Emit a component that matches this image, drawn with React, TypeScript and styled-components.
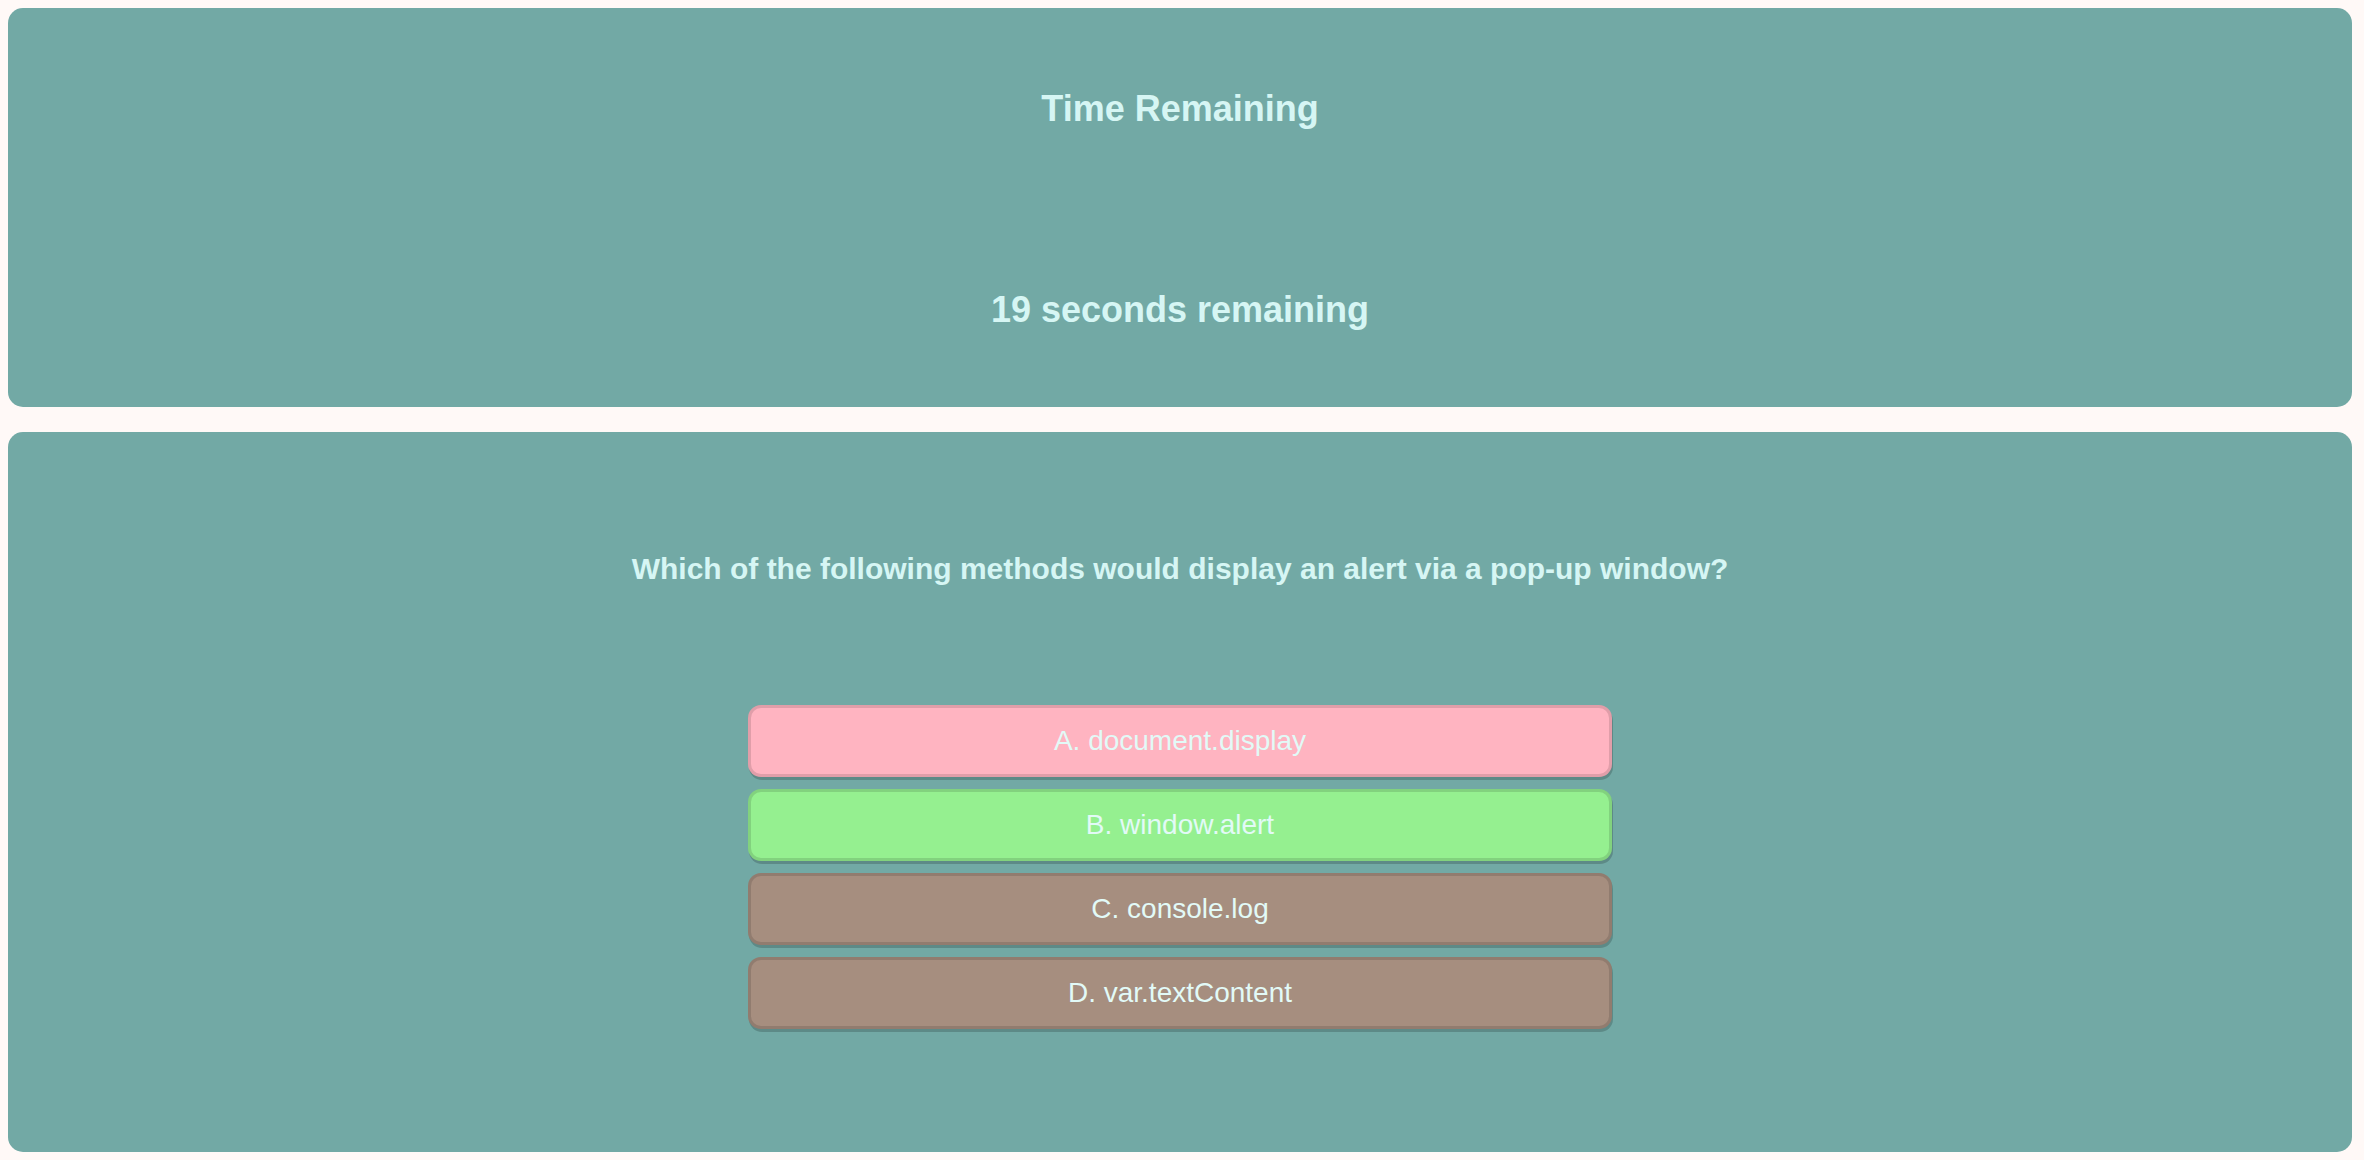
import React from "react";
import styled, { createGlobalStyle } from "styled-components";

const GlobalStyle = createGlobalStyle`
  html, body {
    margin: 0;
    padding: 0;
    background: #fff9f7;
  }
  body {
    font-family: "Liberation Sans", Arial, Helvetica, sans-serif;
  }
  * { box-sizing: border-box; }
`;

const Page = styled.main`
  display: flex;
  flex-direction: column;
  gap: 25px;
  padding: 8px 12px 7px 8px;
  min-height: 1160px;
`;

const Panel = styled.section<{ $pt: number; $pb: number; $gap: number }>`
  background: #72a9a5;
  border-radius: 15px;
  display: flex;
  flex-direction: column;
  align-items: center;
  padding: ${(p) => p.$pt}px 0 ${(p) => p.$pb}px;
  gap: ${(p) => p.$gap}px;
`;

const Heading = styled.h2`
  margin: 0;
  font-size: 36px;
  line-height: 40px;
  font-weight: 700;
  color: #d6f6f4;
  text-align: center;
`;

const Question = styled.h3`
  margin: 0;
  font-size: 30px;
  line-height: 34px;
  font-weight: 700;
  color: #d6f6f4;
  text-align: center;
`;

const Choices = styled.div`
  display: flex;
  flex-direction: column;
  gap: 12px;
  width: 864px;
`;

const tones = {
  wrong: "#ffb4c1",
  right: "#95f090",
  idle: "#a68e7f",
};

const Choice = styled.button<{ $tone: keyof typeof tones }>`
  height: 72px;
  width: 100%;
  border: 3px solid rgba(0, 0, 0, 0.12);
  border-radius: 13px;
  box-shadow: 1px 3px 0 rgba(0, 0, 0, 0.18);
  background: ${(p) => tones[p.$tone]};
  color: #e2faf7;
  font-family: "Liberation Sans", Arial, Helvetica, sans-serif;
  font-size: 28px;
  font-weight: 400;
  display: flex;
  align-items: center;
  justify-content: center;
  padding: 0;
  cursor: pointer;
`;

const choices: { label: string; tone: keyof typeof tones }[] = [
  { label: "A. document.display", tone: "wrong" },
  { label: "B. window.alert", tone: "right" },
  { label: "C. console.log", tone: "idle" },
  { label: "D. var.textContent", tone: "idle" },
];

export default function App() {
  return (
    <>
      <GlobalStyle />
      <Page>
        <Panel $pt={81} $pb={77} $gap={161}>
          <Heading>Time Remaining</Heading>
          <Heading>19 seconds remaining</Heading>
        </Panel>
        <Panel $pt={120} $pb={123} $gap={119}>
          <Question>
            Which of the following methods would display an alert via a pop-up window?
          </Question>
          <Choices>
            {choices.map((c) => (
              <Choice key={c.label} $tone={c.tone}>
                {c.label}
              </Choice>
            ))}
          </Choices>
        </Panel>
      </Page>
    </>
  );
}
